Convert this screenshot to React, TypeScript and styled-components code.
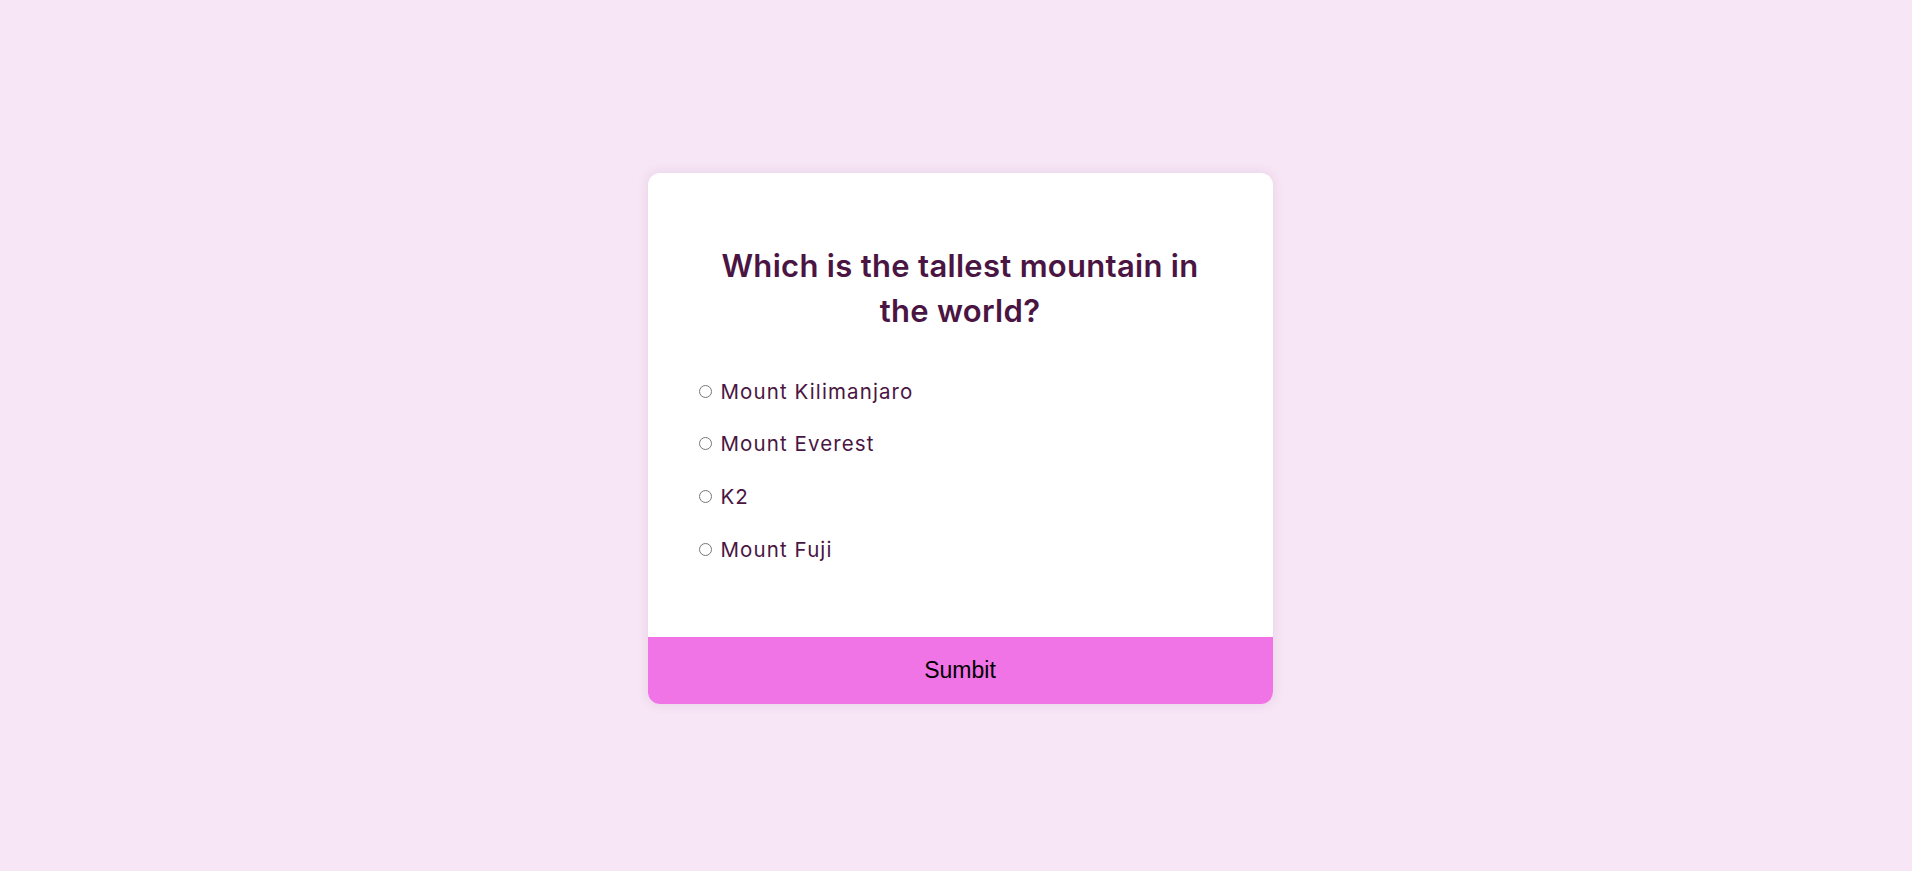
import React, { useState } from 'react'
import styled, { createGlobalStyle } from 'styled-components'

const GlobalStyle = createGlobalStyle`
  * {
    box-sizing: border-box;
  }
  body {
    margin: 0;
    background-color: #f7e6f6;
    font-family: Inter, 'Open Sans', sans-serif;
  }
`

const Page = styled.div`
  display: flex;
  align-items: center;
  justify-content: center;
  min-height: 100vh;
  padding: 6px 0 0 8px;
`

const QuizCard = styled.div`
  width: 625px;
  background: #fff;
  border-radius: 12px;
  box-shadow: 0 0 10px 2px rgba(150, 100, 140, 0.12);
  overflow: hidden;
`

const QuizHeader = styled.div`
  display: flex;
  flex-direction: column;
  padding: 70px 46px 73px;
`

const Question = styled.h2`
  margin: 0 0 43px;
  padding: 0 16px;
  text-align: center;
  font-size: 31px;
  font-weight: 600;
  letter-spacing: 0.3px;
  line-height: 45.6px;
  color: #4a1542;
`

const Options = styled.ul`
  list-style: none;
  margin: 0;
  padding: 0;
  display: flex;
  flex-direction: column;
  gap: 24px;
`

const Option = styled.li`
  display: flex;
  align-items: center;
  height: 28.8px;
  font-size: 20.5px;
  letter-spacing: 1.1px;
  color: #4a1542;
`

const OptionLabel = styled.label`
  display: flex;
  align-items: center;
  gap: 9px;
  cursor: pointer;
`

const Radio = styled.input`
  margin: 0 0 0 5px;
  width: 13px;
  height: 13px;
`

const SubmitButton = styled.button`
  display: block;
  width: 100%;
  border: none;
  background-color: #f074e6;
  color: #000;
  font-family: 'Liberation Sans', Arial, sans-serif;
  font-size: 23px;
  line-height: 26.4px;
  padding: 20.6px;
  cursor: pointer;
`

const answers = ['Mount Kilimanjaro', 'Mount Everest', 'K2', 'Mount Fuji']

const App: React.FC = () => {
  const [selected, setSelected] = useState<string | null>(null)

  return (
    <>
      <GlobalStyle />
      <Page>
        <QuizCard>
          <QuizHeader>
            <Question>Which is the tallest mountain in the world?</Question>
            <Options>
              {answers.map((a) => (
                <Option key={a}>
                  <OptionLabel>
                    <Radio
                      type="radio"
                      name="answer"
                      checked={selected === a}
                      onChange={() => setSelected(a)}
                    />
                    {a}
                  </OptionLabel>
                </Option>
              ))}
            </Options>
          </QuizHeader>
          <SubmitButton>Sumbit</SubmitButton>
        </QuizCard>
      </Page>
    </>
  )
}

export default App
